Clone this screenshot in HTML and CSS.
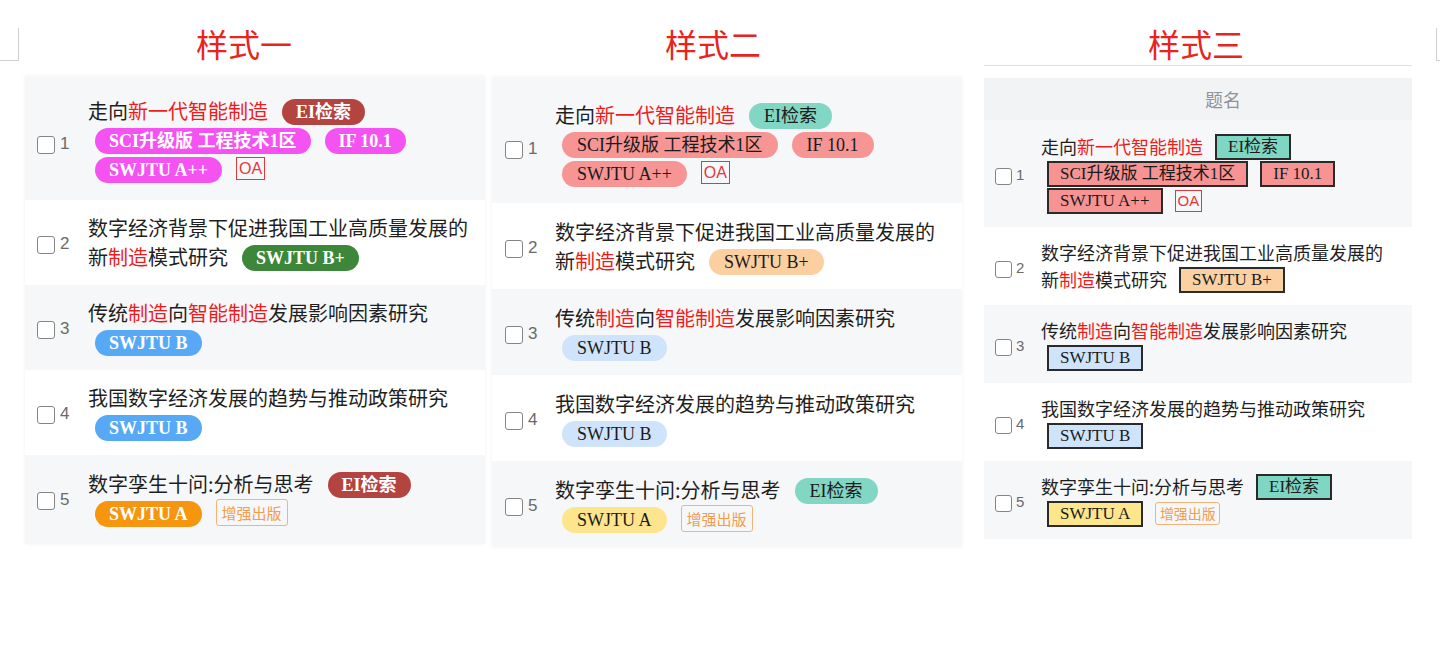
FILE: index.html
```html
<!DOCTYPE html>
<html lang="zh-CN">
<head>
<meta charset="utf-8">
<title>标签样式</title>
<link rel="stylesheet" href="styles.css">
</head>
<body>
<div class="corner corner-l"></div>
<div class="corner corner-r"></div>
<main class="page">
  <section class="col col1">
    <h2 class="heading">样式一</h2>
    <div class="panel s1">
      <div class="row alt">
        <div class="sel"><span class="box"></span><span class="num">1</span></div>
        <div class="cell"><span class="t">走向<em>新一代智能制造</em></span><span class="tag ei">EI检索</span><span class="tag sci">SCI升级版 工程技术1区</span><span class="tag sci">IF 10.1</span><span class="tag sci">SWJTU A++</span><span class="oa">OA</span></div>
      </div>
      <div class="row">
        <div class="sel"><span class="box"></span><span class="num">2</span></div>
        <div class="cell"><span class="t">数字经济背景下促进我国工业高质量发展的新<em>制造</em>模式研究</span><span class="tag bp">SWJTU B+</span></div>
      </div>
      <div class="row alt">
        <div class="sel"><span class="box"></span><span class="num">3</span></div>
        <div class="cell"><span class="t">传统<em>制造</em>向<em>智能制造</em>发展影响因素研究</span><span class="tag b">SWJTU B</span></div>
      </div>
      <div class="row">
        <div class="sel"><span class="box"></span><span class="num">4</span></div>
        <div class="cell"><span class="t">我国数字经济发展的趋势与推动政策研究</span><span class="tag b">SWJTU B</span></div>
      </div>
      <div class="row alt">
        <div class="sel"><span class="box"></span><span class="num">5</span></div>
        <div class="cell"><span class="t">数字孪生十问:分析与思考</span><span class="tag ei">EI检索</span><span class="tag a">SWJTU A</span><span class="zq">增强出版</span></div>
      </div>
    </div>
  </section>

  <section class="col col2">
    <h2 class="heading">样式二</h2>
    <div class="panel s2">
      <div class="row alt">
        <div class="sel"><span class="box"></span><span class="num">1</span></div>
        <div class="cell"><span class="t">走向<em>新一代智能制造</em></span><span class="tag ei">EI检索</span><span class="tag sci">SCI升级版 工程技术1区</span><span class="tag sci">IF 10.1</span><span class="tag sci">SWJTU A++</span><span class="oa">OA</span></div>
      </div>
      <div class="row">
        <div class="sel"><span class="box"></span><span class="num">2</span></div>
        <div class="cell"><span class="t">数字经济背景下促进我国工业高质量发展的新<em>制造</em>模式研究</span><span class="tag bp">SWJTU B+</span></div>
      </div>
      <div class="row alt">
        <div class="sel"><span class="box"></span><span class="num">3</span></div>
        <div class="cell"><span class="t">传统<em>制造</em>向<em>智能制造</em>发展影响因素研究</span><span class="tag b">SWJTU B</span></div>
      </div>
      <div class="row">
        <div class="sel"><span class="box"></span><span class="num">4</span></div>
        <div class="cell"><span class="t">我国数字经济发展的趋势与推动政策研究</span><span class="tag b">SWJTU B</span></div>
      </div>
      <div class="row alt">
        <div class="sel"><span class="box"></span><span class="num">5</span></div>
        <div class="cell"><span class="t">数字孪生十问:分析与思考</span><span class="tag ei">EI检索</span><span class="tag a">SWJTU A</span><span class="zq">增强出版</span></div>
      </div>
    </div>
  </section>

  <section class="col col3">
    <h2 class="heading">样式三</h2>
    <div class="panel s3">
      <div class="thead"><span class="th-sel"></span><span class="th">题名</span></div>
      <div class="row alt">
        <div class="sel"><span class="box"></span><span class="num">1</span></div>
        <div class="cell"><span class="t">走向<em>新一代智能制造</em></span><span class="tag ei">EI检索</span><span class="tag sci">SCI升级版 工程技术1区</span><span class="tag sci">IF 10.1</span><span class="tag sci">SWJTU A++</span><span class="oa">OA</span></div>
      </div>
      <div class="row">
        <div class="sel"><span class="box"></span><span class="num">2</span></div>
        <div class="cell"><span class="t">数字经济背景下促进我国工业高质量发展的新<em>制造</em>模式研究</span><span class="tag bp">SWJTU B+</span></div>
      </div>
      <div class="row alt">
        <div class="sel"><span class="box"></span><span class="num">3</span></div>
        <div class="cell"><span class="t">传统<em>制造</em>向<em>智能制造</em>发展影响因素研究</span><span class="tag b">SWJTU B</span></div>
      </div>
      <div class="row">
        <div class="sel"><span class="box"></span><span class="num">4</span></div>
        <div class="cell"><span class="t">我国数字经济发展的趋势与推动政策研究</span><span class="tag b">SWJTU B</span></div>
      </div>
      <div class="row alt">
        <div class="sel"><span class="box"></span><span class="num">5</span></div>
        <div class="cell"><span class="t">数字孪生十问:分析与思考</span><span class="tag ei">EI检索</span><span class="tag a">SWJTU A</span><span class="zq">增强出版</span></div>
      </div>
    </div>
  </section>
</main>
</body>
</html>
```

FILE: styles.css
```css
* { box-sizing: border-box; }

html, body {
  margin: 0;
  background: #fff;
}

body {
  width: 1440px;
  height: 648px;
  overflow: hidden;
  position: relative;
  font-family: "Noto Sans CJK SC", "Noto Sans", sans-serif;
  color: #1f1f1f;
}

/* decorative frame fragments at the window edges */
.corner {
  position: absolute;
  top: 28px;
  height: 33px;
  border-bottom: 1px solid #cfcfcf;
}
.corner-l {
  left: 0;
  width: 19px;
  border-right: 1px solid #cfcfcf;
}
.corner-r {
  left: 1436px;
  width: 4px;
  border-left: 1px solid #cfcfcf;
}

.page {
  display: grid;
  grid-template-columns: 480px 480px 480px;
}

.col {
  display: flex;
  flex-direction: column;
}

.heading {
  margin: 0;
  height: 63px;
  padding-top: 23px;
  font-size: 32px;
  line-height: 40px;
  font-weight: 400;
  color: #e8241d;
  text-align: center;
}
.col1 .heading { padding-left: 8px; }
.col2 .heading { padding-right: 14px; }
.col3 .heading { padding-right: 8px; }

/* panels */
.panel { display: flex; flex-direction: column; }
.s1 { margin: 13px 0 0 25px; width: 460px; box-shadow: 0 0 4px rgba(0,0,0,0.05); }
.s2 { margin: 14px 0 0 12px; width: 470px; box-shadow: 0 0 4px rgba(0,0,0,0.05); }
.s3 { margin: 2px 0 0 24px; width: 428px; border-top: 1px solid #dcdfe3; padding-top: 12px; }

.row {
  display: flex;
  align-items: center;
  background: #fff;
}
.row.alt { background: #f6f7f9; }

.sel {
  flex: none;
  display: flex;
  align-items: flex-start;
  margin-top: 5px;
}
.box {
  flex: none;
  width: 18px;
  height: 18px;
  border: 1.5px solid #858585;
  border-radius: 3px;
  background: #fff;
}
.num {
  font-family: "Liberation Sans", Arial, sans-serif;
  font-size: 17px;
  line-height: 16px;
  color: #6a6a6a;
  margin-left: 5px;
}

.cell { flex: none; }
.t { margin-right: 7px; }
.t em { font-style: normal; color: #ee1d1d; }

.tag {
  display: inline-flex;
  align-items: center;
  justify-content: center;
  vertical-align: top;
  height: 26px;
  margin: 2.5px 7px 0;
  font-family: "Liberation Serif", "Noto Sans CJK SC", serif;
  font-size: 18px;
  line-height: 22px;
  white-space: nowrap;
}

.oa {
  display: inline-block;
  vertical-align: top;
  margin: 3px 7px 0;
  padding: 0 2px;
  height: 23px;
  border: 1px solid #e0393d;
  color: #e0393d;
  font-family: "Liberation Sans", Arial, sans-serif;
  font-size: 16px;
  line-height: 21px;
}

.zq {
  display: inline-block;
  vertical-align: top;
  margin: 1px 7px 0;
  padding: 0 5px;
  height: 27px;
  border: 1px solid #f3b37a;
  border-radius: 3px;
  color: #f29c4e;
  font-size: 15px;
  line-height: 25px;
}

/* ---- style one ---- */
.s1 .row { padding: 13px 0 14px 12px; }
.s1 .row:first-child { padding-top: 20px; padding-bottom: 17px; }
.s1 .row:last-child { padding-top: 14px; padding-bottom: 17px; }
.s1 .row:first-child .sel { margin-top: 10px; }
.s1 .sel { width: 51px; }
.s1 .cell { width: 390px; font-size: 20px; line-height: 29px; }
.s1 .tag {
  padding: 0 14px;
  border-radius: 13px;
  color: #fff;
  font-weight: 700;
}
.s1 .ei { background: #b3443f; }
.s1 .sci { background: #f552f2; }
.s1 .bp { background: #3d873b; }
.s1 .b { background: #57a9f6; }
.s1 .a { background: #f6950e; }

/* ---- style two ---- */
.s2 .row { padding: 14px 0 14px 13px; }
.s2 .row:first-child { padding-top: 23px; padding-bottom: 16px; }
.s2 .row:first-child .sel { margin-top: 13px; }
.s2 .sel { width: 50px; }
.s2 .cell { width: 390px; font-size: 20px; line-height: 29px; }
.s2 .tag {
  padding: 0 15px;
  border-radius: 13px;
  color: #1b1b1b;
}
.s2 .ei { background: #82d6c4; }
.s2 .sci { background: #f79494; }
.s2 .bp { background: #fbcf9f; }
.s2 .b { background: #cfe4fa; }
.s2 .a { background: #fde58d; }

/* ---- style three ---- */
.thead {
  display: flex;
  align-items: center;
  height: 42px;
  background: #f2f3f5;
}
.th-sel { flex: none; width: 50px; }
.th {
  flex: 1;
  text-align: center;
  color: #909399;
  font-size: 18px;
}

.s3 .row { padding: 12px 0 12px 11px; }
.s3 .row:nth-child(2) { padding-top: 13px; padding-bottom: 13px; }
.s3 .sel { width: 46px; margin-top: 6px; }
.s3 .box { width: 17px; height: 17px; }
.s3 .num { font-size: 15px; line-height: 14px; margin-left: 4px; }
.s3 .cell { width: 350px; font-size: 18px; line-height: 27px; }
.s3 .t { margin-right: 6px; }
.s3 .tag {
  margin: 1px 6px 0;
  padding: 0 11px;
  border: 2px solid #2a2a2a;
  font-size: 17px;
  color: #1b1b1b;
}
.s3 .ei { background: #7fd6c3; }
.s3 .sci { background: #f79393; }
.s3 .bp { background: #fbd1a3; }
.s3 .b { background: #cfe4fa; }
.s3 .a { background: #fde68c; }
.s3 .oa {
  margin: 2.5px 6px 0;
  height: 22px;
  padding: 0 2px;
  font-size: 15px;
  line-height: 20px;
}
.s3 .zq {
  margin: 2px 6px 0;
  padding: 0 3.5px;
  height: 23px;
  font-size: 14px;
  line-height: 21px;
}
```
